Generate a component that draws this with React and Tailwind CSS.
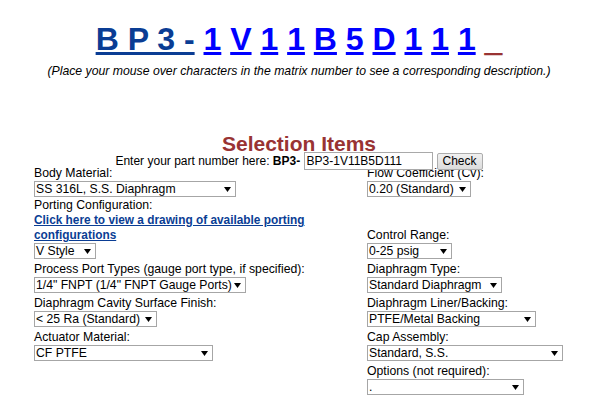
import React from "react";

const Arrow = () => (
  <svg width="7" height="5" viewBox="0 0 7 5" className="shrink-0">
    <polygon points="0,0 7,0 3.5,5" fill="#000" />
  </svg>
);

const Sel = ({ w, children }) => (
  <div
    className={`flex h-[16px] items-center justify-between border border-[#a6a6a6] bg-white pl-[1px] pr-[4px] text-[12.2px] leading-[14px] text-black ${w}`}
  >
    <span className="whitespace-pre">{children}</span>
    <Arrow />
  </div>
);

const Cell = ({ label, children, extra }) => (
  <div className="flex flex-col items-start justify-end pb-[3px]">
    {label && <div className="leading-[15px]">{label}</div>}
    {extra}
    {children}
  </div>
);

const chars = ["1", "V", "1", "1", "B", "5", "D", "1", "1", "1"];

export default function App() {
  return (
    <div className="min-h-[403px] w-[610px] bg-white font-['Liberation_Sans',Arial,sans-serif] text-black">
      <div className="flex w-[598px] flex-col items-center">
        <div className="mt-[21px] whitespace-pre text-[32px] font-bold leading-[36px]">
          <a className="text-[#0a3d94] underline">B P 3 -</a>
          {" "}
          {chars.map((c, i) => (
            <React.Fragment key={i}>
              <a className="text-[#0000ff] underline">{c}</a>{" "}
            </React.Fragment>
          ))}
          <span className="text-[#993333] [text-shadow:0_1px_0_#993333]">_</span>
        </div>
        <p className="mt-[7px] text-[12.25px] italic leading-[14px]">
          (Place your mouse over characters in the matrix number to see a corresponding description.)
        </p>
        <h2 className="mt-[56px] text-[21px] font-bold leading-[20px] text-[#993333]">
          Selection Items
        </h2>
        <div className="relative z-10 -mt-[2px] flex h-[18px] items-center text-[12px] leading-[14px]">
          <span className="whitespace-pre">Enter your part number here: </span>
          <b>BP3-</b>
          <span className="whitespace-pre"> </span>
          <div className="flex h-[18px] w-[129px] items-center border border-[#a9a9a9] bg-white pl-[2px]">
            BP3-1V11B5D111
          </div>
          <div className="ml-[4px] flex h-[17px] w-[46px] items-center justify-center rounded-[2px] border border-[#adadad] bg-gradient-to-b from-[#f0f0f0] to-[#dcdcdc]">
            Check
          </div>
        </div>
      </div>

      <div className="-mt-[4px] ml-[34px] grid grid-cols-[333px_auto] text-[12.25px] leading-[15px]">
        <div className="flex flex-col items-start justify-end pb-[1px]">
          <div className="leading-[15px]">Body Material:</div>
          <Sel w="w-[202px]">SS 316L, S.S. Diaphragm</Sel>
        </div>
        <div className="flex flex-col items-start justify-end pb-[1px]">
          <div className="leading-[15px]">Flow Coefficient (Cv):</div>
          <Sel w="w-[104px]">0.20 (Standard)</Sel>
        </div>

        <Cell
          label="Porting Configuration:"
          extra={
            <a className="text-[11.85px] font-bold leading-[15px] text-[#0a3d94] underline">
              Click here to view a drawing of available porting
              <br />
              configurations
            </a>
          }
        >
          <Sel w="w-[62px]">V Style</Sel>
        </Cell>
        <Cell label="Control Range:">
          <Sel w="w-[85px]">0-25 psig</Sel>
        </Cell>

        <Cell label="Process Port Types (gauge port type, if specified):">
          <Sel w="w-[212px]">1/4" FNPT (1/4" FNPT Gauge Ports)</Sel>
        </Cell>
        <Cell label="Diaphragm Type:">
          <Sel w="w-[135px]">Standard Diaphragm</Sel>
        </Cell>

        <Cell label="Diaphragm Cavity Surface Finish:">
          <Sel w="w-[123px]">{"< 25 Ra (Standard)"}</Sel>
        </Cell>
        <Cell label="Diaphragm Liner/Backing:">
          <Sel w="w-[169px]">PTFE/Metal Backing</Sel>
        </Cell>

        <Cell label="Actuator Material:">
          <Sel w="w-[179px]">CF PTFE</Sel>
        </Cell>
        <Cell label="Cap Assembly:">
          <Sel w="w-[196px]">Standard, S.S.</Sel>
        </Cell>

        <div />
        <Cell label="Options (not required):">
          <Sel w="w-[157px]">.</Sel>
        </Cell>
      </div>
    </div>
  );
}
